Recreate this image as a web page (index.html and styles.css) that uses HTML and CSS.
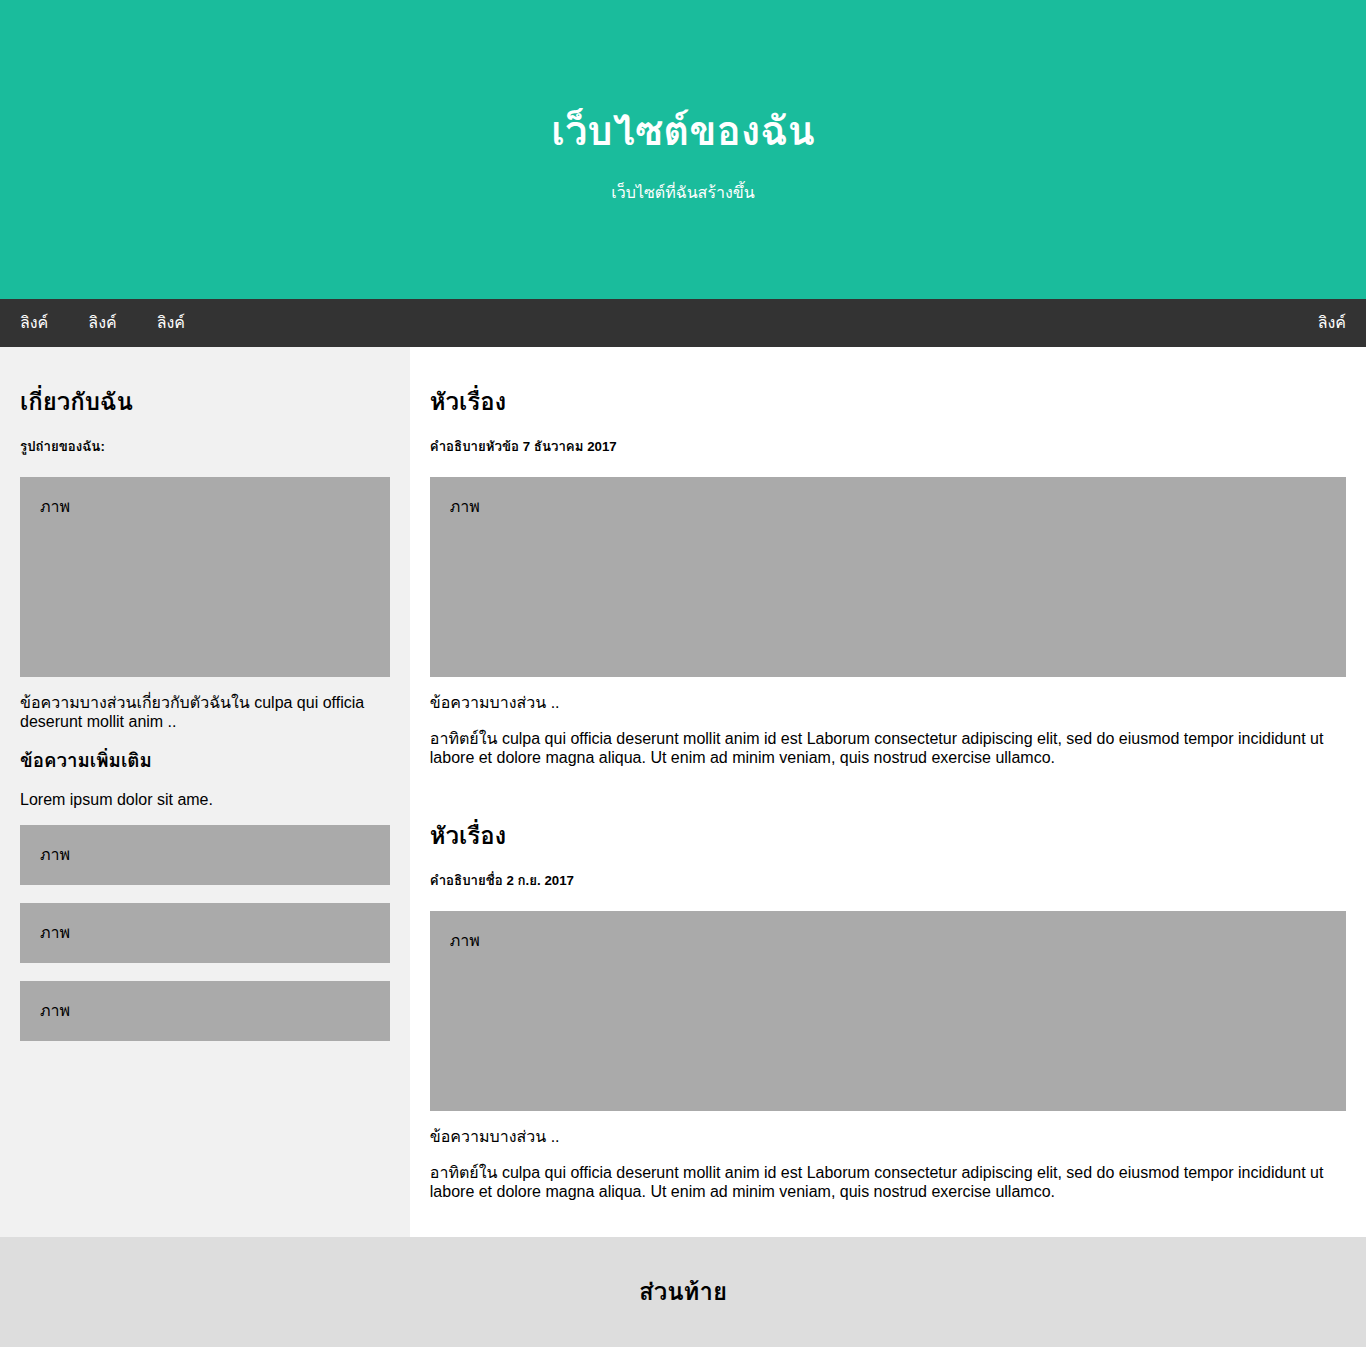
FILE: index.html
```html
<!DOCTYPE html>
<html lang="th">
<head>
<meta charset="utf-8">
<title>เว็บไซต์ของฉัน</title>
<link rel="stylesheet" href="styles.css">
</head>
<body>
<div class="header">
  <h1>เว็บไซต์ของฉัน</h1>
  <p>เว็บไซต์ที่ฉันสร้างขึ้น</p>
</div>

<div class="navbar">
  <a href="#">ลิงค์</a>
  <a href="#">ลิงค์</a>
  <a href="#">ลิงค์</a>
  <a href="#" class="right">ลิงค์</a>
</div>

<div class="row">
  <div class="side">
    <h2>เกี่ยวกับฉัน</h2>
    <h5>รูปถ่ายของฉัน:</h5>
    <div class="fakeimg tall">ภาพ</div>
    <p class="mixed">ข้อความบางส่วนเกี่ยวกับตัวฉันใน culpa qui officia deserunt mollit anim ..</p>
    <h3>ข้อความเพิ่มเติม</h3>
    <p>Lorem ipsum dolor sit ame.</p>
    <div class="fakeimg short">ภาพ</div><br>
    <div class="fakeimg short">ภาพ</div><br>
    <div class="fakeimg short">ภาพ</div>
  </div>
  <div class="main">
    <h2>หัวเรื่อง</h2>
    <h5>คำอธิบายหัวข้อ 7 ธันวาคม 2017</h5>
    <div class="fakeimg tall">ภาพ</div>
    <p class="lead">ข้อความบางส่วน ..</p>
    <p class="mixed">อาทิตย์ใน culpa qui officia deserunt mollit anim id est Laborum consectetur adipiscing elit, sed do eiusmod tempor incididunt ut labore et dolore magna aliqua. Ut enim ad minim veniam, quis nostrud exercise ullamco.</p>
    <br>
    <h2>หัวเรื่อง</h2>
    <h5>คำอธิบายชื่อ 2 ก.ย. 2017</h5>
    <div class="fakeimg tall">ภาพ</div>
    <p class="lead">ข้อความบางส่วน ..</p>
    <p class="mixed">อาทิตย์ใน culpa qui officia deserunt mollit anim id est Laborum consectetur adipiscing elit, sed do eiusmod tempor incididunt ut labore et dolore magna aliqua. Ut enim ad minim veniam, quis nostrud exercise ullamco.</p>
  </div>
</div>

<div class="footer">
  <h2>ส่วนท้าย</h2>
</div>
</body>
</html>
```

FILE: styles.css
```css
* {
  box-sizing: border-box;
}

body {
  margin: 0;
  font-family: "Liberation Sans", Arial, Tahoma, Loma, Waree, Garuda, "Noto Sans Thai Looped", "Noto Sans Thai", sans-serif;
  font-size: 16px;
  line-height: 18px;
  color: #000;
}

.header {
  padding: 80px;
  text-align: center;
  background: #1abc9c;
  color: #fff;
}

.header h1 {
  font-size: 40px;
  line-height: 49px;
  margin: 26.8px 0;
}

.header p {
  line-height: 20px;
  margin: 16px 0;
}

.navbar {
  display: flex;
  background-color: #333;
}

.navbar a {
  display: block;
  color: #fff;
  text-align: center;
  padding: 14px 20px;
  line-height: 20px;
  text-decoration: none;
}

.navbar a.right {
  margin-left: auto;
}

.row {
  display: flex;
}

.side {
  flex: 0 0 30%;
  background-color: #f1f1f1;
  padding: 20px;
}

.main {
  flex: 0 0 70%;
  background-color: #fff;
  padding: 20px;
}

h2 {
  font-size: 24px;
  line-height: 30px;
  margin: 20px 0;
}

h3 {
  font-size: 18.72px;
  line-height: 23px;
  margin: 18.72px 0;
}

h5 {
  font-size: 13.28px;
  line-height: 16px;
  margin: 22px 0;
}

p {
  margin: 16px 0;
  line-height: 18px;
}

p.lead {
  line-height: 20px;
}

p.mixed {
  line-height: 19px;
}

.fakeimg {
  background-color: #aaa;
  width: 100%;
  padding: 20px;
  line-height: 20px;
}

.fakeimg.tall {
  height: 200px;
}

.fakeimg.short {
  height: 60px;
}

.footer {
  padding: 20px;
  text-align: center;
  background: #ddd;
}
```
